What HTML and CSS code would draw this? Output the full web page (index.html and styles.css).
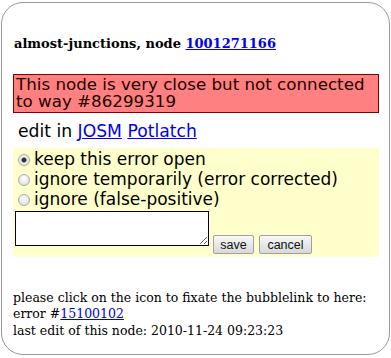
FILE: index.html
```html
<!DOCTYPE html>
<html lang="en">
<head>
  <meta charset="UTF-8">
  <title>Error bubble</title>
  <link rel="stylesheet" href="styles.css">
</head>
<body>

  <div class="bubble">
    <h5 class="title">almost-junctions, node <a href="#">1001271166</a></h5>

    <div class="error">This node is very close but not connected to way #86299319</div>

    <div class="edit">edit in <a href="#">JOSM</a> <a href="#">Potlatch</a></div>

    <form class="comment">
      <label><input type="radio" name="st" checked>keep this error open</label>
      <label><input type="radio" name="st">ignore temporarily (error corrected)</label>
      <label><input type="radio" name="st">ignore (false-positive)</label>
      <div class="actions">
        <textarea></textarea>
        <button type="button" class="save">save</button>
        <button type="button" class="cancel">cancel</button>
      </div>
    </form>

    <div class="info">
      please click on the icon to fixate the bubblelink to here:<br>
      error #<a href="#">15100102</a><br>
      last edit of this node: 2010-11-24 09:23:23
    </div>
  </div>

</body>
</html>
```

FILE: styles.css
```css
body {
  margin: 0;
  background: #fff;
  font-family: "DejaVu Serif", serif;
}

a {
  color: #0000ee;
}

.bubble {
  box-sizing: border-box;
  width: 389px;
  height: 353px;
  margin: 2px 0 0 1px;
  border: 1px solid #999;
  border-radius: 22px;
  padding: 0 10px 0 11px;
}

.title {
  margin: 33px 0 0 1px;
  font-size: 13px;
  font-weight: bold;
}

.error {
  margin-top: 23px;
  background: #ff8080;
  border: 1px solid #800000;
  padding: 1px 2px 2px;
  font-family: "DejaVu Sans", sans-serif;
  font-size: 16.7px;
  line-height: 17px;
  color: #200;
}

.edit {
  margin: 8px 0 0 5px;
  font-family: "DejaVu Sans", sans-serif;
  font-size: 17.2px;
  line-height: 20px;
}

.comment {
  margin-top: 7px;
  background: #ffffcc;
  padding: 1px 2px 3px;
  font-family: "DejaVu Sans", sans-serif;
  font-size: 17px;
}

.comment label {
  display: flex;
  align-items: center;
  height: 20px;
}

.comment input {
  appearance: none;
  flex: none;
  width: 12px;
  height: 12px;
  margin: 1px 4px 0 3px;
  border: 1px solid #aaa;
  border-radius: 50%;
  background: radial-gradient(circle at 50% 35%, #fff, #d8d8d8);
}

.comment input:checked {
  background: radial-gradient(circle, #333 0 2px, #eee 3px, #d8d8d8);
}

.actions {
  display: flex;
  align-items: flex-start;
  margin-top: 2px;
}

textarea {
  box-sizing: border-box;
  width: 194px;
  height: 35px;
  border: 1px solid #000;
  margin: 0 4px 0 0;
}

button {
  font-family: "Liberation Sans", sans-serif;
  font-size: 12.5px;
  height: 19px;
  margin-top: 24px;
  padding: 0;
  border: 1px solid #a0a0a0;
  border-radius: 2px;
  background: linear-gradient(#f8f8f8, #d8d8d8);
  color: #111;
}

.save {
  width: 41px;
  margin-right: 5px;
}

.cancel {
  width: 53px;
}

.info {
  margin-top: 33px;
  font-size: 12.5px;
  line-height: 16.3px;
}
```
